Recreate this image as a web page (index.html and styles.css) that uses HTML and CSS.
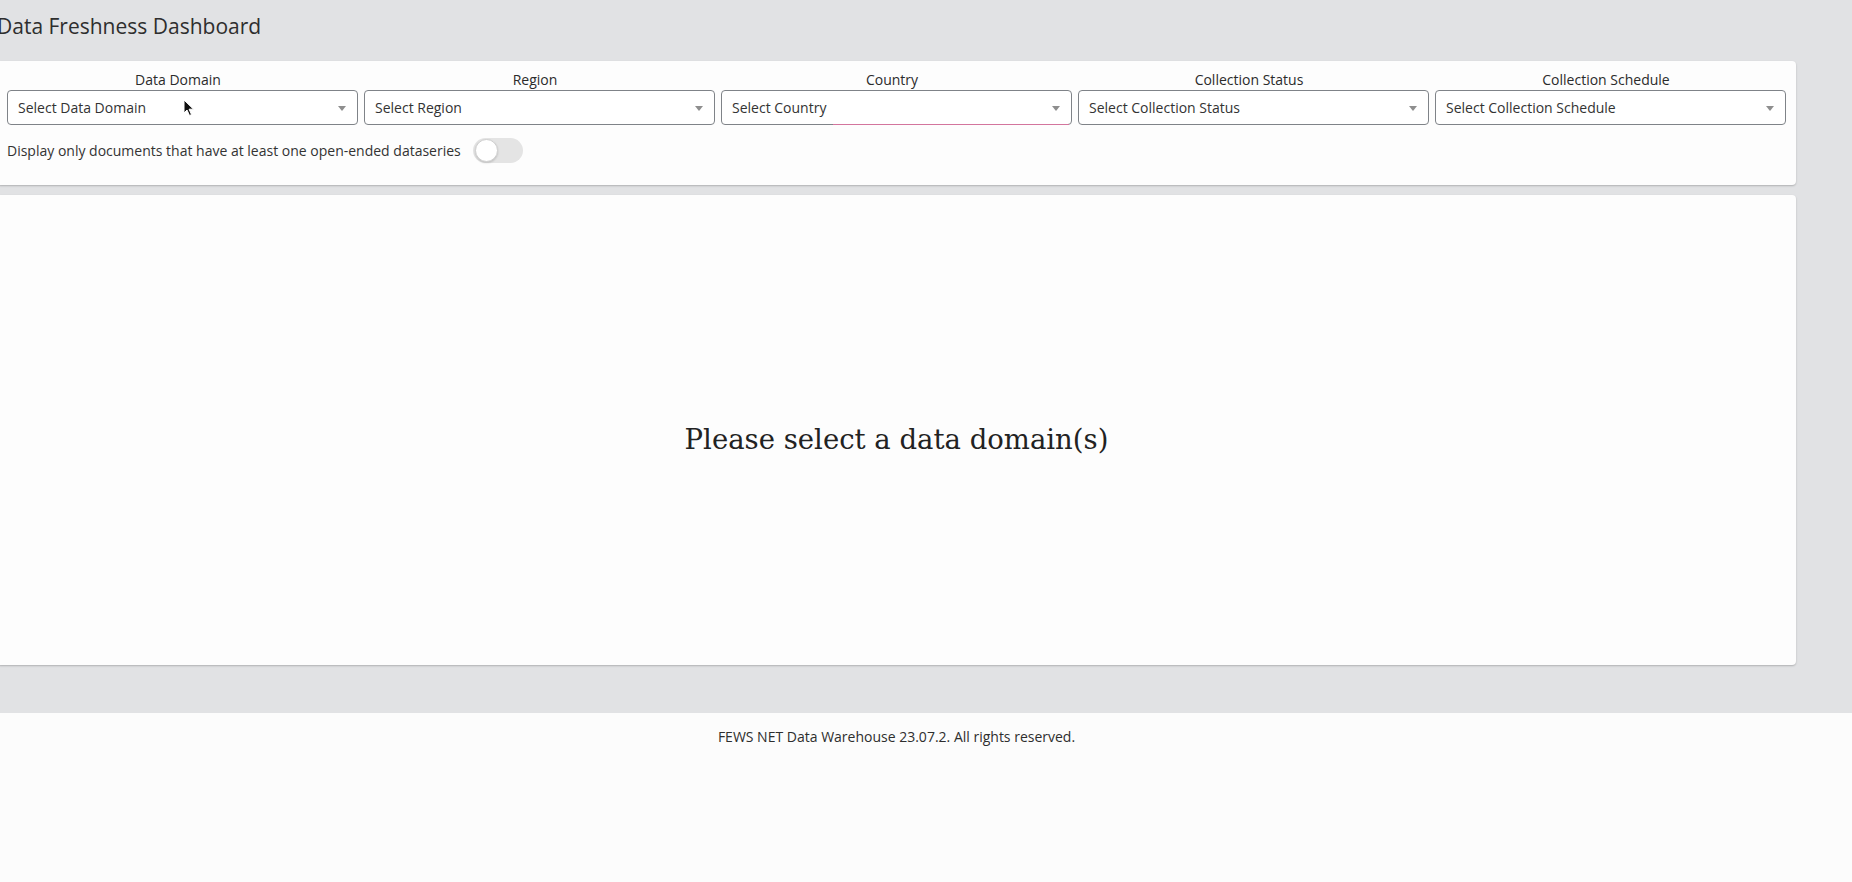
FILE: index.html
```html
<html>
<head>
    <meta charset="UTF-8">
    <title>Data Freshness Dashboard</title>
    <link rel="stylesheet" href="styles.css">
</head>
<body>

<div class="page">
    <div class="content">
        <h1 class="page-title">Data Freshness Dashboard</h1>

        <div class="card filters">
            <div class="filter-grid">
                <div class="filter">
                    <label>Data Domain</label>
                    <div class="select">Select Data Domain<span class="arrow"></span></div>
                </div>
                <div class="filter">
                    <label>Region</label>
                    <div class="select">Select Region<span class="arrow"></span></div>
                </div>
                <div class="filter">
                    <label>Country</label>
                    <div class="select select-focus">Select Country<span class="arrow"></span></div>
                </div>
                <div class="filter">
                    <label>Collection Status</label>
                    <div class="select">Select Collection Status<span class="arrow"></span></div>
                </div>
                <div class="filter">
                    <label>Collection Schedule</label>
                    <div class="select">Select Collection Schedule<span class="arrow"></span></div>
                </div>
            </div>
            <div class="toggle-row">
                <span>Display only documents that have at least one open-ended dataseries</span>
                <span class="switch"><span class="knob"></span></span>
            </div>
            <!-- mouse pointer from the capture -->
            <svg class="cursor" width="12" height="18" viewBox="0 0 12 18">
                <path d="M1 1 L1 14 L4 11 L6.5 16.5 L8.5 15.6 L6.1 10.2 L10.5 10.2 Z" fill="#111" stroke="#fff" stroke-width="1"/>
            </svg>
        </div>

        <div class="card results">
            <p class="empty-msg">Please select a data domain(s)</p>
        </div>
    </div>

    <div class="footer">
        <div class="footer-inner">FEWS NET Data Warehouse 23.07.2. All rights reserved.</div>
    </div>
</div>

</body>
</html>
```

FILE: styles.css
```css
*{ margin:0; padding:0;}
body{font:14px/1.4 "Open Sans",Arial,sans-serif;background:#e1e2e4;color:#333;overflow:hidden;}

/* layout */
.page{min-height:882px;display:flex;flex-direction:column;}
.content{width:1799px;margin-left:-3px;margin-bottom:48px;}
.page-title{font-size:21px;font-weight:normal;line-height:30px;padding-top:11px;margin-bottom:20px;color:#2e2e2e;}

.card{background:#fdfdfd;border-radius:4px;box-shadow:0 1px 2px rgba(0,0,0,.22);}

/* filters */
.filters{position:relative;padding:10px 10px 22px 10px;}
.filter-grid{display:grid;grid-template-columns:repeat(5,1fr);gap:6px;}
.filter label{display:block;text-align:center;font-size:14px;line-height:18px;margin-bottom:1px;padding-right:9px;color:#2b2b2b;}
.select{position:relative;height:33px;line-height:33px;border:1px solid #7f8388;border-radius:4px;padding-left:10px;font-size:14px;color:#333;background:#fff;}
.select .arrow{position:absolute;right:11px;top:15px;width:0;height:0;border-left:4px solid transparent;border-right:4px solid transparent;border-top:5px solid #8e8e8e;}
.select-focus:after{content:"";position:absolute;left:111px;right:2px;bottom:-1px;height:1px;background:#d3759d;}

.toggle-row{display:flex;align-items:center;gap:12px;margin-top:13px;height:25px;font-size:14px;}
.switch{position:relative;width:50px;height:25px;border-radius:13px;background:#e4e4e4;}
.switch .knob{position:absolute;left:2px;top:1px;width:21px;height:21px;border-radius:50%;background:#fff;border:1px solid #cfcfcf;box-shadow:0 1px 2px rgba(0,0,0,.15);}

.cursor{position:absolute;left:186px;top:38px;}

/* results */
.results{margin-top:10px;height:470px;display:flex;align-items:center;justify-content:center;padding-top:18px;box-sizing:border-box;}
.empty-msg{font:27.5px/1.2 "DejaVu Serif","Liberation Serif",serif;color:#222;}

/* footer */
.footer{flex:1;background:#fcfcfc;}
.footer-inner{width:1799px;margin-left:-3px;text-align:center;padding-top:14px;line-height:20px;font-size:14px;color:#2e2e2e;}
```
